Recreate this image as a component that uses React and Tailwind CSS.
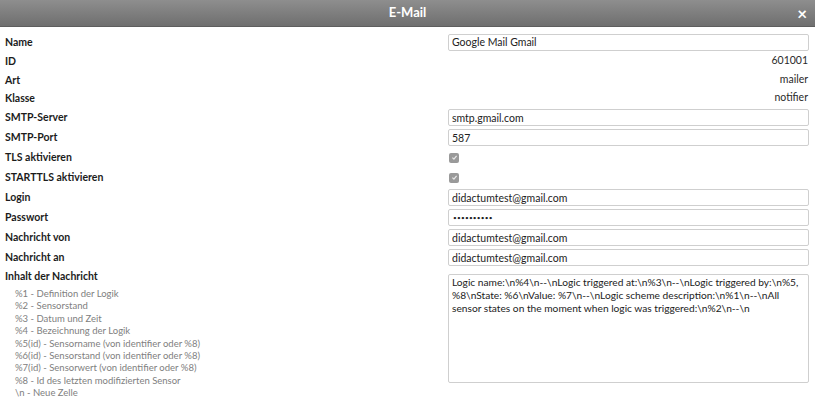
import React from "react";

const font = { fontFamily: "Lato, 'Open Sans', sans-serif" };

const hints = [
    "%1 - Definition der Logik",
    "%2 - Sensorstand",
    "%3 - Datum und Zeit",
    "%4 - Bezeichnung der Logik",
    "%5(id) - Sensorname (von identifier oder %8)",
    "%6(id) - Sensorstand (von identifier oder %8)",
    "%7(id) - Sensorwert (von identifier oder %8)",
    "%8 - Id des letzten modifizierten Sensor",
    "\\n - Neue Zelle",
];

const message =
    "Logic name:\\n%4\\n--\\nLogic triggered at:\\n%3\\n--\\nLogic triggered by:\\n%5,\n" +
    "%8\\nState: %6\\nValue: %7\\n--\\nLogic scheme description:\\n%1\\n--\\nAll\n" +
    "sensor states on the moment when logic was triggered:\\n%2\\n--\\n";

const Label = ({ children }) => (
    <div className="text-[10.5px] font-bold text-[#1c1c1c] leading-none">{children}</div>
);

const InputRow = ({ label, value, small }) => (
    <div className="flex items-center justify-between h-[20px]">
        <Label>{label}</Label>
        <input
            readOnly
            value={value}
            className={
                small
                    ? "w-[361px] h-[17px] border border-[#cfcfcf] rounded-[2px] bg-white px-[4px] text-[6.5px] tracking-[0.2px] text-[#222] outline-none"
                    : "w-[361px] h-[17px] border border-[#cfcfcf] rounded-[2px] bg-white px-[3px] text-[10.5px] text-[#222] outline-none"
            }
        />
    </div>
);

const TextRow = ({ label, value }) => (
    <div className="flex items-center justify-between h-[18.5px]">
        <Label>{label}</Label>
        <div className="text-[10.5px] text-[#2a2a2a] pr-[1px]">{value}</div>
    </div>
);

const CheckRow = ({ label }) => (
    <div className="flex items-center justify-between h-[20px]">
        <Label>{label}</Label>
        <div className="w-[361px] flex">
            <span className="ml-[1px] w-[10px] h-[10px] rounded-[2px] bg-[#9a9a9a] flex items-center justify-center">
                <svg width="7" height="7" viewBox="0 0 10 10">
                    <path d="M2 5.2 L4.2 7.4 L8 2.8" stroke="#e8e8e8" strokeWidth="1.8" fill="none" />
                </svg>
            </span>
        </div>
    </div>
);

export default function App() {
    return (
        <div className="w-[815px] h-[398px] bg-white overflow-hidden" style={font}>
            <div className="relative h-[27px] bg-gradient-to-b from-[#8e8e8e] to-[#6f6f6f] border-b border-[#5e5e5e] flex items-center justify-center">
                <span className="text-white font-bold text-[13px]">E-Mail</span>
                <span className="absolute right-[8px] top-[5px] text-white font-bold text-[17px] leading-none">×</span>
            </div>

            <div className="pl-[5px] pr-[6px] pt-[5px]">
                <InputRow label="Name" value="Google Mail Gmail" />
                <TextRow label="ID" value="601001" />
                <TextRow label="Art" value="mailer" />
                <TextRow label="Klasse" value="notifier" />
                <InputRow label="SMTP-Server" value="smtp.gmail.com" />
                <InputRow label="SMTP-Port" value="587" />
                <CheckRow label="TLS aktivieren" />
                <CheckRow label="STARTTLS aktivieren" />
                <InputRow label="Login" value="didactumtest@gmail.com" />
                <InputRow label="Passwort" value="••••••••••" small />
                <InputRow label="Nachricht von" value="didactumtest@gmail.com" />
                <InputRow label="Nachricht an" value="didactumtest@gmail.com" />

                <div className="flex justify-between pt-[3px]">
                    <div>
                        <Label>Inhalt der Nachricht</Label>
                        <ul className="mt-[7px] pl-[10px] text-[9.5px] text-[#808080] leading-[12.4px]">
                            {hints.map((h) => (
                                <li key={h}>{h}</li>
                            ))}
                        </ul>
                    </div>
                    <textarea
                        readOnly
                        wrap="off"
                        value={message}
                        className="mt-[3px] w-[361px] h-[109px] border border-[#cfcfcf] rounded-[2px] px-[3px] py-[1px] text-[10.2px] leading-[13px] text-[#222] resize-none outline-none overflow-hidden"
                    />
                </div>
            </div>
        </div>
    );
}
